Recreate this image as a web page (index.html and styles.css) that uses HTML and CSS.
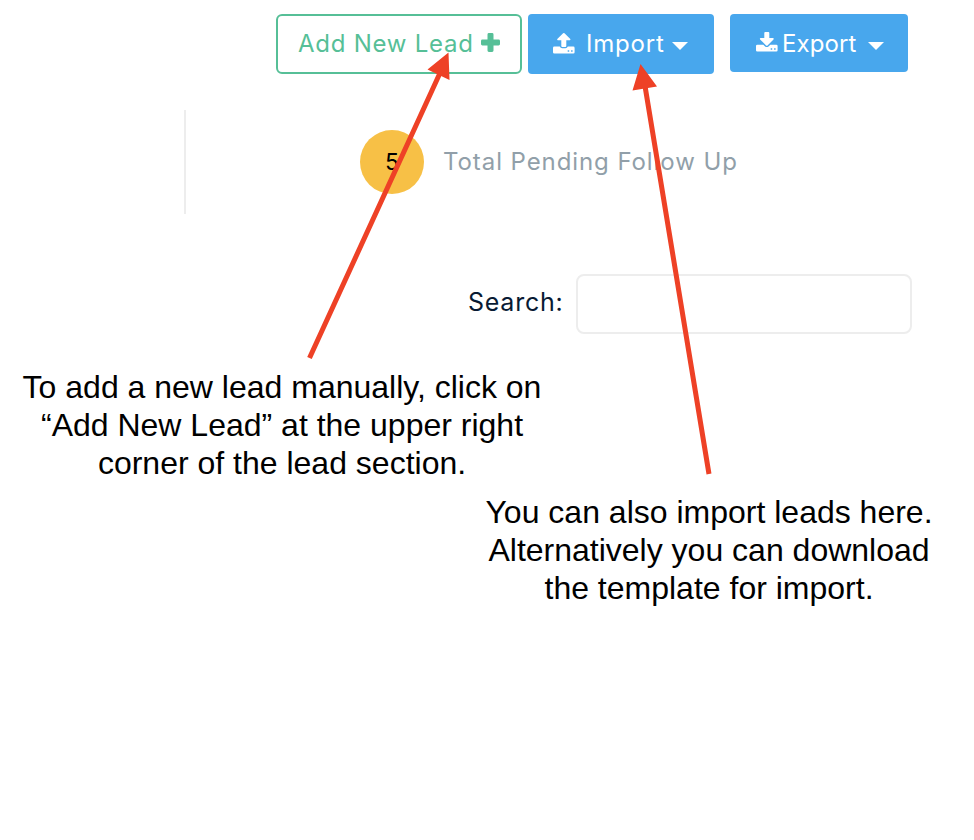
FILE: index.html
```html
<!DOCTYPE html>
<html lang="en">
<head>
<meta charset="utf-8">
<title>Leads</title>
<link rel="stylesheet" href="styles.css">
</head>
<body>
<main class="page">
  <div class="toolbar">
    <button class="btn btn-add"><span class="add-label">Add New Lead</span>
      <svg class="plus" width="19" height="19" viewBox="0 0 19 19"><path d="M7.9 0h3.2q1.4 0 1.4 1.4v5.1h5.1q1.4 0 1.4 1.4v3.2q0 1.4-1.4 1.4h-5.1v5.1q0 1.4-1.4 1.4H7.9q-1.4 0-1.4-1.4v-5.1H1.4Q0 12.500 0 11.100V7.900q0-1.400 1.400-1.400h5.100V1.400Q6.500 0 7.900 0z" fill="currentColor"/></svg>
    </button>
    <button class="btn btn-import">
      <svg class="tray" width="22" height="21" viewBox="0 0 22 21"><path fill="currentColor" fill-rule="evenodd" d="M10.800 0q.4 0 .7.300l5.800 5.600q.6 1.300-.7 1.300h-3.300v5.800q0 .9-.9.900H9.200q-.9 0-.9-.9V7.200H5q-1.300 0-.7-1.300L10.100.3q.3-.3.700-.3zM1.300 13.600h5.500q.7 1.700 2.400 1.700h3.200q1.700 0 2.400-1.700h5.500q1.300 0 1.300 1.300v4.300q0 1.300-1.300 1.300h-19Q0 20.500 0 19.200v-4.300q0-1.300 1.300-1.300zM14.700 17.300v1.500h1.500v-1.500zM18.100 17.300v1.500h1.500v-1.500z"/></svg>
      <span class="import-label">Import</span>
      <svg class="caret" width="16" height="8" viewBox="0 0 16 8"><path d="M0 0h16L8 8z" fill="currentColor"/></svg>
    </button>
    <button class="btn btn-export">
      <svg class="tray" width="22" height="20" viewBox="0 0 22 20"><path fill="currentColor" fill-rule="evenodd" d="M9.200 0h3.200q.9 0 .9.900v5.200h3.600q1.300 0 .6 1.300l-6 6q-.7.600-1.400 0l-6-6Q3.400 6.100 4.700 6.100h3.600V.9q0-.9.900-.9zM1.300 12.700h6l1.800 1.700q1.700 1.400 3.400 0l1.800-1.700h6q1.300 0 1.300 1.300v4.300q0 1.300-1.300 1.300h-19Q0 19.600 0 18.300V14q0-1.300 1.300-1.300zM14.700 16.300v1.500h1.500v-1.500zM18.100 16.300v1.500h1.500v-1.500z"/></svg>
      <span class="export-label">Export</span>
      <svg class="caret" width="16" height="8" viewBox="0 0 16 8"><path d="M0 0h16L8 8z" fill="currentColor"/></svg>
    </button>
  </div>
  <div class="summary">
    <span class="count">5</span>
    <span class="summary-label">Total Pending Follow Up</span>
  </div>
  <div class="search">
    <label class="search-label" for="q">Search:</label>
    <input class="search-input" id="q" type="text">
  </div>
  <p class="note note-add">To add a new lead manually, click on<br>“Add New Lead” at the upper right<br>corner of the lead section.</p>
  <p class="note note-import">You can also import leads here.<br>Alternatively you can download<br>the template for import.</p>
  <svg class="arrows" width="974" height="840" viewBox="0 0 974 840">
    <path d="M309.500 358L440 73M709 474L645 86" stroke="#ee4126" stroke-width="5" fill="none"/>
    <path d="M448.500 52.500L427.500 69.500L449.500 80zM640.500 64L632.500 90.500L657 86.500z" fill="#ee4126"/>
  </svg>
</main>
</body>
</html>
```
FILE: styles.css
```css
* { box-sizing: border-box; }
body { margin: 0; background: #fff; font-family: Inter, sans-serif; }
.page { position: relative; width: 974px; height: 840px; overflow: hidden; }
.toolbar { display: flex; align-items: flex-start; padding: 14px 0 0 276px; height: 110px; }
.btn { display: flex; align-items: center; border: 0; border-radius: 4px; height: 60px; padding: 0; font: 400 24px/30px Inter, sans-serif; text-align: left; white-space: nowrap; color: #fff; background: #48a7ed; }
.btn svg { flex: none; }
.btn-add { width: 246px; margin-right: 6px; padding-left: 20px; border: 2px solid #56bf97; border-radius: 6px; color: #56bf97; background: #fff; }
.add-label { width: 183px; letter-spacing: .75px; }
.plus { margin-top: -3px; }
.btn-import { width: 186px; margin-right: 16px; padding-left: 25px; }
.btn-import .tray { margin-top: -2px; }
.import-label { width: 79px; margin: 0 7px 0 11px; letter-spacing: .8px; }
.btn-import .caret { margin-top: 3px; }
.btn-export .caret { margin-top: 5px; }
.btn-export { width: 178px; height: 58px; padding-left: 26px; }
.btn-export .tray { margin-top: -2px; }
.export-label { width: 76px; margin: 2px 10px 0 4px; letter-spacing: .1px; }
.summary { display: flex; align-items: center; width: 600px; height: 104px; margin-left: 184px; padding-left: 174px; border-left: 2px solid #ededed; }
.count { display: flex; flex: none; align-items: center; justify-content: center; width: 64px; height: 64px; border-radius: 50%; background: #f7c046; color: #000; font-size: 23px; }
.summary-label { margin: -2px 0 0 19px; color: #919fa9; font-size: 24px; letter-spacing: .92px; white-space: nowrap; }
.search { display: flex; align-items: center; margin: 60px 0 0 468px; }
.search-label { width: 108px; margin-top: -4px; color: #081a33; font-size: 25px; letter-spacing: .75px; }
.search-input { width: 336px; height: 60px; border: 2px solid #ededed; border-radius: 8px; background: #fff; }
.note { margin: 0; text-align: center; color: #000; font: 32px/38px "Liberation Sans", sans-serif; white-space: nowrap; }
.note-add { width: 564px; margin-top: 34px; }
.note-import { width: 500px; margin: 11px 0 0 459px; }
.arrows { position: absolute; left: 0; top: 0; pointer-events: none; }
```
